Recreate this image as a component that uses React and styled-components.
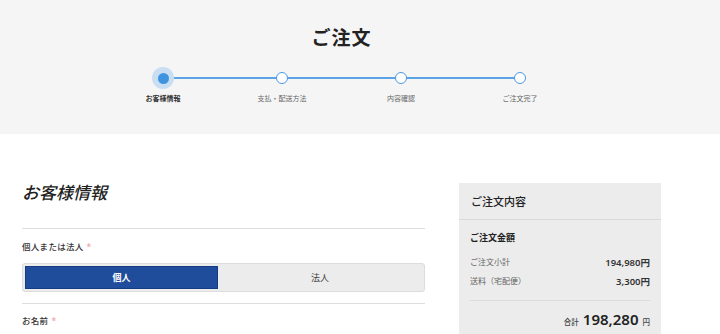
import styled, { createGlobalStyle } from 'styled-components';

const GlobalStyle = createGlobalStyle`
  body {
    margin: 0;
    background: #ffffff;
    font-family: 'Noto Sans', 'Noto Sans CJK JP', sans-serif;
    color: #222;
  }
`;

const Header = styled.header`
  height: 134px;
  box-sizing: border-box;
  padding-top: 27px;
  background: #f5f5f5;
`;

const Container = styled.div`
  width: 639px;
  margin-left: 22px;
`;

const Title = styled.h1`
  margin: 0;
  text-align: center;
  font-size: 19px;
  line-height: 22px;
  font-weight: 700;
  letter-spacing: 1px;
  color: #222;
`;

const Stepper = styled.ol`
  display: grid;
  grid-template-columns: repeat(4, 119px);
  width: 476px;
  margin: 18px auto 0;
  padding: 0;
  list-style: none;
`;

const Step = styled.li`
  position: relative;
  display: flex;
  flex-direction: column;
  align-items: center;

  &:not(:last-child)::after {
    content: '';
    position: absolute;
    top: 10px;
    left: 50%;
    width: 100%;
    height: 1.5px;
    background: #5ca4e6;
  }
`;

const Dot = styled.span`
  position: relative;
  z-index: 1;
  display: flex;
  align-items: center;
  justify-content: center;
  width: 22px;
  height: 22px;
  border-radius: 50%;
  background: ${(p) => (p.active ? '#c7def3' : 'transparent')};

  &::before {
    content: '';
    box-sizing: border-box;
    width: ${(p) => (p.active ? '11px' : '12px')};
    height: ${(p) => (p.active ? '11px' : '12px')};
    border-radius: 50%;
    background: ${(p) => (p.active ? '#3e94df' : '#ffffff')};
    border: ${(p) => (p.active ? 'none' : '1.5px solid #4b9ae2')};
  }
`;

const StepLabel = styled.span`
  margin-top: 5px;
  font-size: 7px;
  line-height: 10px;
  font-weight: ${(p) => (p.active ? 700 : 400)};
  color: ${(p) => (p.active ? '#333' : '#666')};
`;

const Main = styled(Container)`
  display: flex;
  align-items: flex-start;
  gap: 34px;
  padding-top: 49px;
`;

const FormColumn = styled.section`
  width: 403px;
`;

const Heading = styled.h2`
  margin: 0;
  font-size: 17px;
  line-height: 20px;
  font-weight: 500;
  font-style: italic;
  color: #222;
`;

const Field = styled.div`
  border-top: 1px solid #dedede;
  margin-top: ${(p) => p.offset || 0}px;
  padding: ${(p) => p.pad || 12}px 0 11px;
`;

const Label = styled.div`
  font-size: 8.5px;
  line-height: 12px;
  font-weight: 500;
  letter-spacing: 0.3px;
  color: #333;
`;

const Required = styled.span`
  margin-left: 3px;
  color: #f0a3ab;
`;

const Toggle = styled.div`
  display: grid;
  grid-template-columns: 193px 1fr;
  margin-top: 10px;
  height: 29px;
  box-sizing: border-box;
  padding: 2px;
  border: 1px solid #dcdcdc;
  border-radius: 3px;
  background: #ececec;
`;

const ToggleButton = styled.button`
  border: 1px solid ${(p) => (p.active ? '#163c85' : 'transparent')};
  background: ${(p) => (p.active ? '#1f4c9b' : 'transparent')};
  color: ${(p) => (p.active ? '#ffffff' : '#444')};
  font-family: inherit;
  font-size: 9px;
  font-weight: ${(p) => (p.active ? 700 : 400)};
  cursor: pointer;
`;

const Panel = styled.aside`
  width: 202px;
  background: #ececec;
`;

const PanelHeader = styled.div`
  height: 36px;
  display: flex;
  align-items: center;
  padding: 0 12px;
  border-bottom: 1px solid #dadada;
  font-size: 11px;
  font-weight: 500;
  color: #222;
`;

const PanelBody = styled.div`
  padding: 11px 11px 12px;
`;

const SubTitle = styled.div`
  font-size: 9px;
  line-height: 14px;
  font-weight: 700;
  color: #222;
  margin-bottom: 7px;
`;

const Row = styled.div`
  display: flex;
  justify-content: space-between;
  align-items: center;
  height: 19px;
`;

const RowLabel = styled.span`
  font-size: 8px;
  color: #666;
`;

const RowValue = styled.span`
  font-size: 9.5px;
  font-weight: 600;
  color: #333;
`;

const Total = styled.div`
  display: flex;
  justify-content: flex-end;
  align-items: baseline;
  gap: 4px;
  margin-top: 10px;
  padding-top: 8px;
  border-top: 1.5px solid #dcdcdc;
  color: #222;
`;

const TotalLabel = styled.span`
  font-size: 7.5px;
  font-weight: 500;
  color: #444;
`;

const TotalAmount = styled.span`
  font-size: 15px;
  font-weight: 600;
`;

const steps = ['お客様情報', '支払・配送方法', '内容確認', 'ご注文完了'];

export default function App() {
  return (
    <>
      <GlobalStyle />
      <Header>
        <Container>
          <Title>ご注文</Title>
          <Stepper>
            {steps.map((s, i) => (
              <Step key={s}>
                <Dot active={i === 0} />
                <StepLabel active={i === 0}>{s}</StepLabel>
              </Step>
            ))}
          </Stepper>
        </Container>
      </Header>
      <Main>
        <FormColumn>
          <Heading>お客様情報</Heading>
          <Field offset={25}>
            <Label>
              個人または法人<Required>*</Required>
            </Label>
            <Toggle>
              <ToggleButton active>個人</ToggleButton>
              <ToggleButton>法人</ToggleButton>
            </Toggle>
          </Field>
          <Field pad={11}>
            <Label>
              お名前<Required>*</Required>
            </Label>
          </Field>
        </FormColumn>
        <Panel>
          <PanelHeader>ご注文内容</PanelHeader>
          <PanelBody>
            <SubTitle>ご注文金額</SubTitle>
            <Row>
              <RowLabel>ご注文小計</RowLabel>
              <RowValue>194,980円</RowValue>
            </Row>
            <Row>
              <RowLabel>送料（宅配便）</RowLabel>
              <RowValue>3,300円</RowValue>
            </Row>
            <Total>
              <TotalLabel>合計</TotalLabel>
              <TotalAmount>198,280</TotalAmount>
              <TotalLabel>円</TotalLabel>
            </Total>
          </PanelBody>
        </Panel>
      </Main>
    </>
  );
}
